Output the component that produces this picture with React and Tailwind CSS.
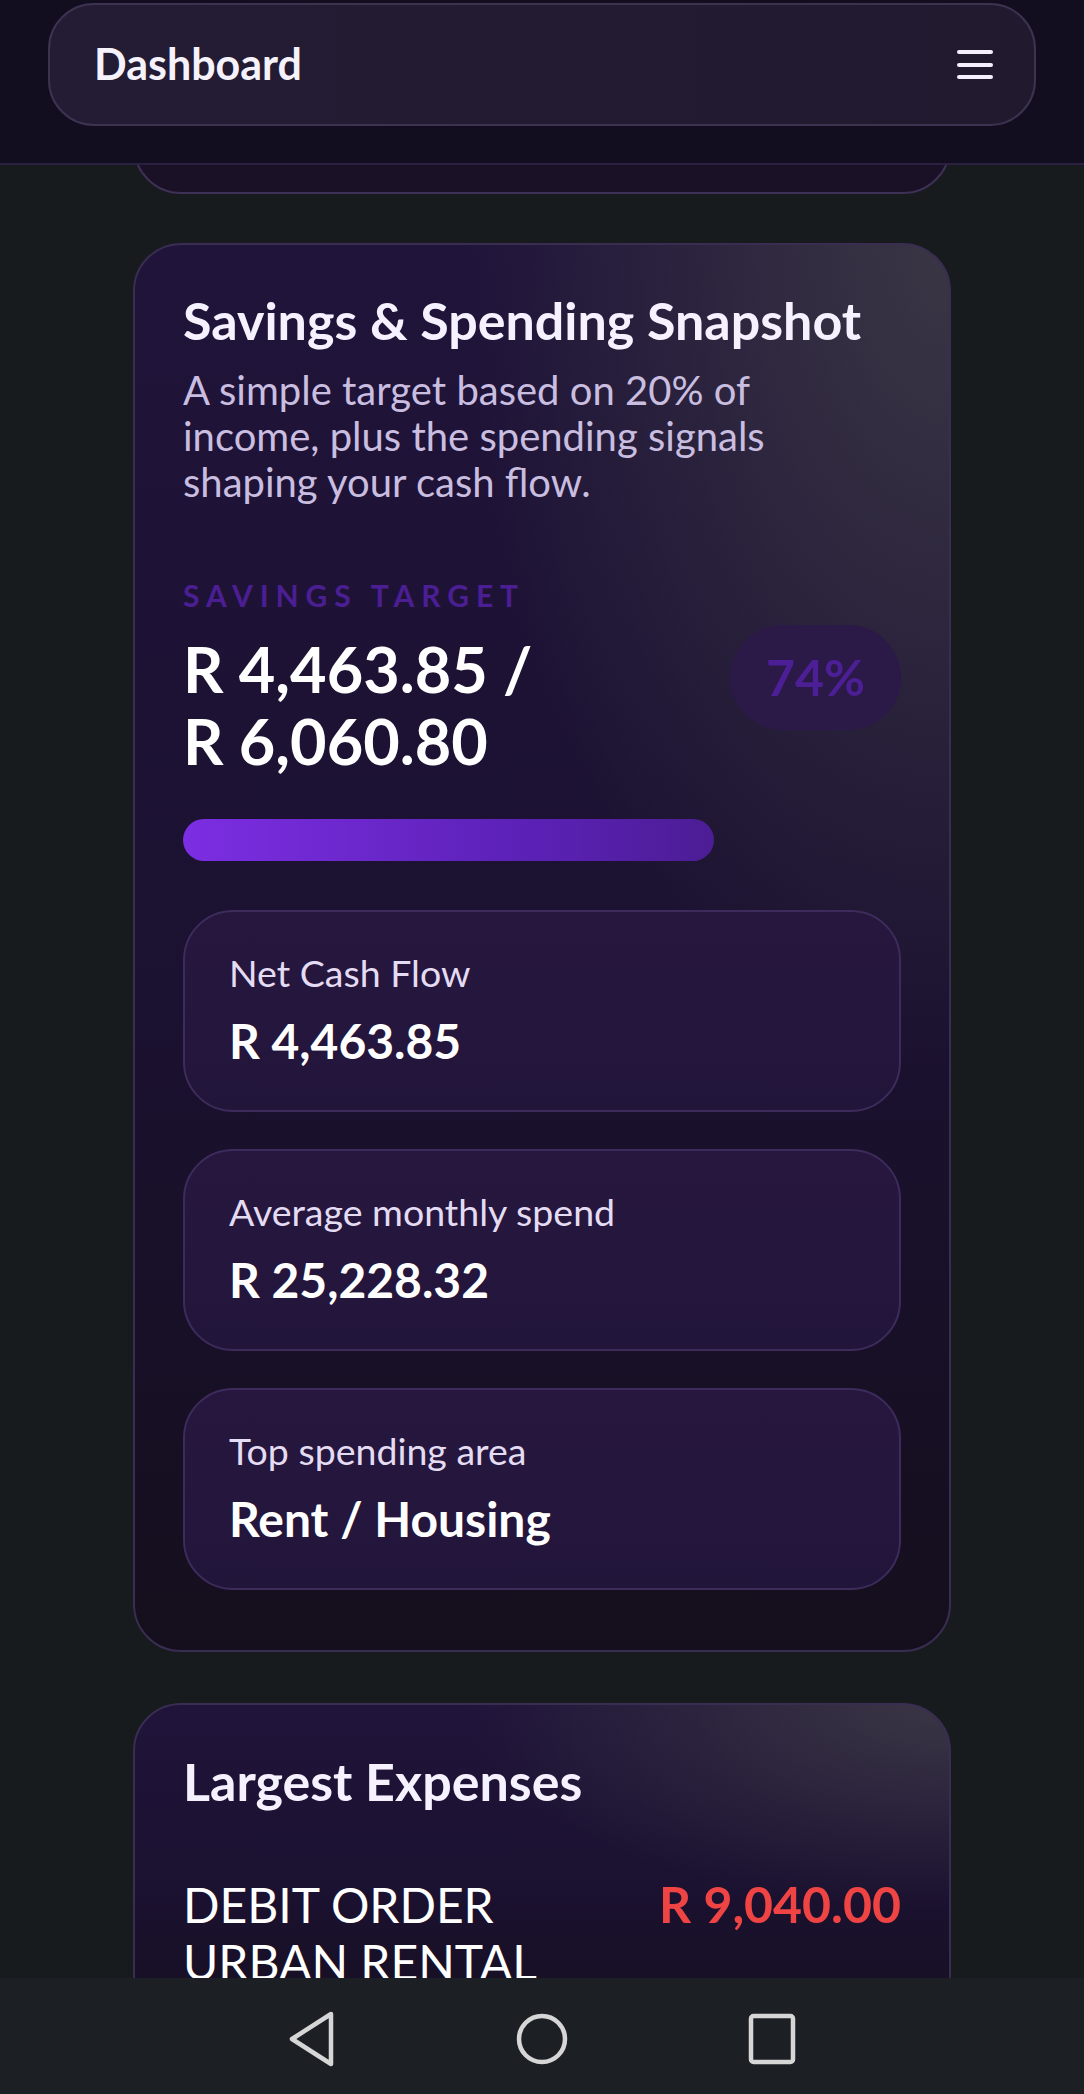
import React from 'react'

const STATS = [
  { label: 'Net Cash Flow', value: 'R 4,463.85' },
  { label: 'Average monthly spend', value: 'R 25,228.32' },
  { label: 'Top spending area', value: 'Rent / Housing' },
]

const CARD_BG =
  'bg-[radial-gradient(ellipse_at_100%_0%,rgba(62,60,70,0.85),transparent_42%),linear-gradient(180deg,#20143a,#1b1130_55%,#150f1d)]'

function StatCard({ label, value }) {
  return (
    <div className="rounded-[50px] border-2 border-[#3d2b5c] bg-[linear-gradient(180deg,#27173f,#22153a)] px-[44px] pt-[40px] pb-[42px]">
      <div className="text-[37.5px] leading-[42px] text-[#e4dcf3]">{label}</div>
      <div className="mt-[19px] text-[48px] leading-[55px] font-bold text-white">{value}</div>
    </div>
  )
}

export default function App() {
  return (
    <div className="h-[2094px] flex flex-col bg-[#171b1d] font-['Lato','Noto_Sans',sans-serif] overflow-hidden">

      {/* ── Header ── */}
      <header className="h-[165px] shrink-0 bg-[#120e20] border-b-2 border-[#2a2140] px-[48px] pt-[3px]">
        <div className="h-[123px] rounded-[46px] border-2 border-[#3b3350] bg-[linear-gradient(90deg,#241c34,#211a2f)] flex items-center justify-between pl-[44px] pr-[41px]">
          <span className="text-[43px] font-bold text-[#f5f2fb]">Dashboard</span>
          <div className="flex flex-col gap-[8.5px]">
            <span className="block w-[36px] h-[4px] rounded-full bg-[#f3effc]" />
            <span className="block w-[36px] h-[4px] rounded-full bg-[#f3effc]" />
            <span className="block w-[36px] h-[4px] rounded-full bg-[#f3effc]" />
          </div>
        </div>
      </header>

      {/* ── Scroll area ── */}
      <main className="flex-1 overflow-hidden">
        <div className="w-[818px] ml-[133px]">

          {/* previous card, scrolled under the header */}
          <div className="-mt-[91px] h-[120px] rounded-[48px] border-2 border-[#3e3056] bg-[#1a1126]" />

          {/* Savings & Spending Snapshot */}
          <section className={`mt-[49px] rounded-[48px] border-2 border-[#3a2d52] ${CARD_BG} px-[48px] pt-[45px] pb-[60px]`}>
            <h2 className="text-[52px] leading-[60px] font-bold text-[#f6f1ff]">Savings &amp; Spending Snapshot</h2>
            <p className="mt-[17px] max-w-[630px] text-[40px] leading-[46px] text-[#c9bee0]">
              A simple target based on 20% of income, plus the spending signals shaping your cash flow.
            </p>

            <div className="mt-[73px] flex items-center justify-between">
              <div>
                <div className="text-[30px] leading-[35px] font-bold tracking-[0.23em] text-[#4b1e93]">SAVINGS TARGET</div>
                <div className="mt-[20px] text-[63px] leading-[72px] font-bold text-white">
                  R{'\u00a0'}4,463.85 / R{'\u00a0'}6,060.80
                </div>
              </div>
              <div className="rounded-full bg-[#2b1948] px-[36px] py-[23px] text-[50px] leading-[59px] font-bold text-[#4d1f97]">74%</div>
            </div>

            <div className="mt-[42px] h-[42px] rounded-full">
              <div className="h-full rounded-full bg-[linear-gradient(90deg,#7c2ee2,#5b21b6_65%,#4c1d95)]" style={{ width: '74%' }} />
            </div>

            <div className="mt-[49px] flex flex-col gap-[37px]">
              {STATS.map(s => <StatCard key={s.label} {...s} />)}
            </div>
          </section>

          {/* Largest Expenses */}
          <section className={`mt-[51px] rounded-[48px] border-2 border-[#3a2d52] ${CARD_BG} px-[48px] pt-[46px] pb-[60px]`}>
            <h2 className="text-[52px] leading-[60px] font-bold text-[#f6f1ff]">Largest Expenses</h2>
            <div className="mt-[65px] flex items-start justify-between gap-[40px]">
              <div className="text-[48px] leading-[57px] text-white">DEBIT ORDER URBAN RENTAL</div>
              <div className="shrink-0 text-[50px] leading-[57px] font-bold text-[#ef4444]">R 9,040.00</div>
            </div>
          </section>
        </div>
      </main>

      {/* ── System nav ── */}
      <nav className="h-[116px] shrink-0 bg-[#1c2024] flex items-center justify-center gap-[180px] pt-[5px]">
        <svg width="48" height="56" viewBox="0 0 48 56" fill="none" stroke="#d6d6d6" strokeWidth="4.5" strokeLinejoin="round">
          <polygon points="43,3 4,28 43,53" />
        </svg>
        <svg width="52" height="52" viewBox="0 0 52 52" fill="none" stroke="#d6d6d6" strokeWidth="4.5">
          <circle cx="26" cy="26" r="23" />
        </svg>
        <svg width="48" height="52" viewBox="0 0 48 52" fill="none" stroke="#d6d6d6" strokeWidth="4.5">
          <rect x="3" y="3" width="42" height="46" rx="2.5" />
        </svg>
      </nav>
    </div>
  )
}
